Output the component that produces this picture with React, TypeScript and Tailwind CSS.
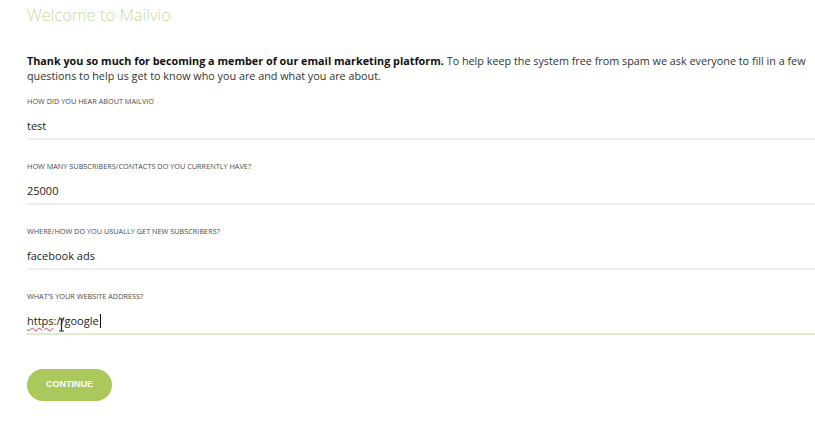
import React from "react"

type Field = {
  label: string
  value: string
}

const fields: Field[] = [
  { label: "How did you hear about Mailvio", value: "test" },
  { label: "How many subscribers/contacts do you currently have?", value: "25000" },
  { label: "Where/how do you usually get new subscribers?", value: "facebook ads" },
]

function FormField({ label, children, active }: { label: string; children: React.ReactNode; active?: boolean }) {
  return (
    <div className="mb-[21px]">
      <div className="h-[10px] text-[7.3px] leading-[10px] uppercase text-[#4a4a4a]">{label}</div>
      <div
        className={`mt-[8px] h-[26px] flex items-center border-b-2 text-[11px] text-[#222] ${
          active ? "border-[#e3eacd]" : "border-[#eeeeee]"
        }`}
      >
        {children}
      </div>
    </div>
  )
}

// mouse I-beam cursor sitting over the last field
function IBeam() {
  return (
    <svg className="absolute left-[-3px] top-[5px]" width="7" height="14" viewBox="0 0 7 14">
      <path d="M1 1h2l0.5 0.5L4 1h2M3.5 1.5v11M1 13h2l0.5-0.5L4 13h2" fill="none" stroke="#222" strokeWidth="1.2" />
    </svg>
  )
}

export default function App() {
  return (
    <div className="min-h-[426px] bg-white pl-[27px]" style={{ fontFamily: '"Open Sans", "Noto Sans", sans-serif' }}>
      <h1 className="pt-[3px] text-[16.5px] leading-[24px] font-light text-[#c8da9f]">Welcome to Mailvio</h1>

      <p className="mt-[26px] pr-[2px] text-[10.8px] leading-[15px] text-[#333]">
        <span className="font-bold text-[#111]">Thank you so much for becoming a member of our email marketing platform.</span>{" "}
        To help keep the system free from spam we ask everyone to fill in a few questions to help us get to know who you
        are and what you are about.
      </p>

      <div className="mt-[13px]">
        {fields.map((f) => (
          <FormField key={f.label} label={f.label}>
            {f.value}
          </FormField>
        ))}
        <FormField label="What's your website address?" active>
          <span className="underline decoration-wavy decoration-[#e04040] decoration-1 underline-offset-2">https</span>
          <span>:/</span>
          <span className="relative">
            /google
            <IBeam />
          </span>
          <span className="ml-px h-[14px] w-px bg-[#111]" />
        </FormField>
      </div>

      <button
        className="mt-[13px] h-[32px] w-[85px] rounded-full bg-[#aac85b] text-[9px] font-bold text-white"
        style={{ fontFamily: '"Liberation Sans", Arial, sans-serif' }}
      >
        CONTINUE
      </button>
    </div>
  )
}
